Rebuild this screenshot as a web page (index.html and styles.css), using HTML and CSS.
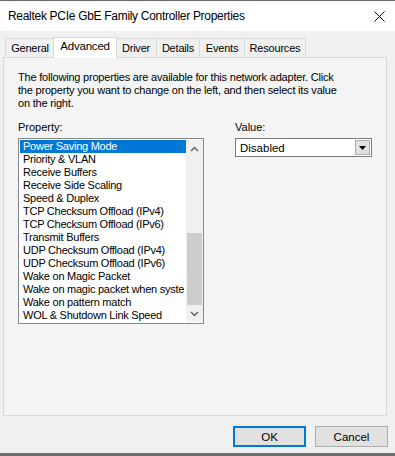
FILE: index.html
```html
<!DOCTYPE html>
<html lang="en">
<head>
	<meta charset="UTF-8">
	<title>Properties</title>
	<link rel="stylesheet" href="styles.css">
</head>
<body>
	<div class="dlg">
		<div class="titlebar">
			<span class="title">Realtek PCIe GbE Family Controller Properties</span>
			<svg class="close" width="11" height="11" viewBox="0 0 11 11"><path d="M0.5 0.5L10.5 10.5M10.5 0.5L0.5 10.5" stroke="#000" stroke-width="1"/></svg>
		</div>
		<div class="body">
			<ul class="tabs">
				<li class="t1">General</li>
				<li class="t2 act">Advanced</li>
				<li class="t3">Driver</li>
				<li class="t4">Details</li>
				<li class="t5">Events</li>
				<li class="t6">Resources</li>
			</ul>
			<div class="panel">
				<p class="intro">The following properties are available for this network adapter. Click the property you want to change on the left, and then select its value on the right.</p>
				<div class="fields">
					<div class="prop">
						<div class="lbl">Property:</div>
						<div class="listbox">
							<ul class="items">
								<li class="sel">Power Saving Mode</li>
								<li>Priority &amp; VLAN</li>
								<li>Receive Buffers</li>
								<li>Receive Side Scaling</li>
								<li>Speed &amp; Duplex</li>
								<li>TCP Checksum Offload (IPv4)</li>
								<li>TCP Checksum Offload (IPv6)</li>
								<li>Transmit Buffers</li>
								<li>UDP Checksum Offload (IPv4)</li>
								<li>UDP Checksum Offload (IPv6)</li>
								<li>Wake on Magic Packet</li>
								<li>Wake on magic packet when syste</li>
								<li>Wake on pattern match</li>
								<li>WOL &amp; Shutdown Link Speed</li>
							</ul>
							<div class="sbar">
								<div class="arr"><svg width="9" height="6" viewBox="0 0 9 6"><path d="M1 5L4.5 1.5L8 5" fill="none" stroke="#606060" stroke-width="1.4"/></svg></div>
								<div class="track"><div class="thumb"></div></div>
								<div class="arr"><svg width="9" height="6" viewBox="0 0 9 6"><path d="M1 1L4.5 4.5L8 1" fill="none" stroke="#606060" stroke-width="1.4"/></svg></div>
							</div>
						</div>
					</div>
					<div class="val">
						<div class="lbl">Value:</div>
						<div class="combo">
							<span class="ctext">Disabled</span>
							<span class="dropbtn"><svg width="7" height="4" viewBox="0 0 7 4"><path d="M0 0H7L3.5 4Z" fill="#000"/></svg></span>
						</div>
					</div>
				</div>
			</div>
			<div class="btns">
				<button class="btn def">OK</button>
				<button class="btn">Cancel</button>
			</div>
		</div>
	</div>
</body>
</html>
```
FILE: styles.css
```css
html, body{
	margin: 0;
	padding: 0;
}
body{
	background: #f0f0f0;
	font-family: "Liberation Sans", Arial, sans-serif;
	font-size: 11px;
	color: #000;
}
ul{
	list-style: none;
	margin: 0;
	padding: 0;
}
.dlg{
	width: 395px;
	height: 456px;
	display: flex;
	flex-direction: column;
	border-top: 1px solid #6a6a6a;
	border-bottom: 3px solid #6e6e6e;
	box-sizing: border-box;
}
.titlebar{
	height: 30px;
	background: #fff;
	display: flex;
	align-items: center;
	justify-content: space-between;
	padding: 0 10px 0 8px;
	flex-shrink: 0;
}
.title{
	font-size: 12px;
	letter-spacing: -0.3px;
}
.body{
	flex: 1;
	display: flex;
	flex-direction: column;
	padding: 7px 8px 0 3px;
}
/* tabs */
.tabs{
	display: flex;
	align-items: flex-end;
	padding-left: 2px;
	height: 19px;
	position: relative;
	z-index: 1;
}
.tabs li{
	position: relative;
	box-sizing: border-box;
	height: 18px;
	line-height: 18px;
	text-align: center;
	border: 1px solid #d9d9d9;
	border-bottom: none;
	margin-left: -1px;
	margin-bottom: 1px;
	background: #f0f0f0;
	letter-spacing: -0.2px;
}
.tabs .t1{ width: 50px; margin-left: 0; }
.tabs .t2{ width: 64px; margin-left: -2px; }
.tabs .t3{ width: 42px; }
.tabs .t4{ width: 44px; }
.tabs .t5{ width: 46px; }
.tabs .t6{ width: 62px; }
.tabs .act{
	height: 21px;
	line-height: 16px;
	background: #fff;
	margin-bottom: -1px;
	font-size: 11.5px;
	z-index: 2;
}
.tabs .t3{
	margin-left: -2px;
}
/* panel */
.panel{
	height: 357px;
	border: 1px solid #d9d9d9;
	background: #f4f4f4;
	padding: 0 14px;
}
.intro{
	margin: 13px 0 0 0;
	line-height: 13px;
	width: 322px;
	letter-spacing: -0.2px;
}
.fields{
	display: flex;
	margin-top: 11px;
}
.lbl{
	height: 17px;
	line-height: 13px;
}
.prop{
	width: 219px;
}
.listbox{
	width: 186px;
	height: 186px;
	border: 1px solid #828790;
	background: #fff;
	display: flex;
	padding: 1px 0 1px 1px;
	box-sizing: border-box;
}
.items{
	flex: 1;
	overflow: hidden;
	letter-spacing: -0.25px;
}
.items li{
	height: 13px;
	line-height: 13px;
	padding-left: 3px;
	white-space: nowrap;
	overflow: hidden;
}
.items .sel{
	background: #0078d7;
	color: #fff;
}
.sbar{
	width: 17px;
	background: #f0f0f0;
	display: flex;
	flex-direction: column;
}
.arr{
	height: 17px;
	display: flex;
	align-items: center;
	justify-content: center;
}
.track{
	flex: 1;
	display: flex;
	flex-direction: column;
	justify-content: flex-end;
	padding: 0 1px;
}
.thumb{
	height: 72px;
	background: #cdcdcd;
}
/* value */
.combo{
	width: 137px;
	height: 19px;
	border: 1px solid #7a7a7a;
	background: #fff;
	display: flex;
	align-items: center;
	justify-content: space-between;
	box-sizing: border-box;
	padding: 1px;
}
.ctext{
	padding-left: 3px;
	font-size: 11.5px;
}
.dropbtn{
	width: 15px;
	height: 15px;
	background: #e1e1e1;
	border: 1px solid #adadad;
	box-sizing: border-box;
	display: flex;
	align-items: center;
	justify-content: center;
}
/* buttons */
.btns{
	display: flex;
	justify-content: flex-end;
	gap: 9px;
	margin-top: 10px;
	margin-right: -1px;
}
.btn{
	width: 73px;
	height: 21px;
	font-family: "Liberation Sans", Arial, sans-serif;
	font-size: 11.5px;
	background: #e1e1e1;
	border: 1px solid #adadad;
	padding: 0;
}
.btn.def{
	border: 2px solid #0078d7;
}
```
